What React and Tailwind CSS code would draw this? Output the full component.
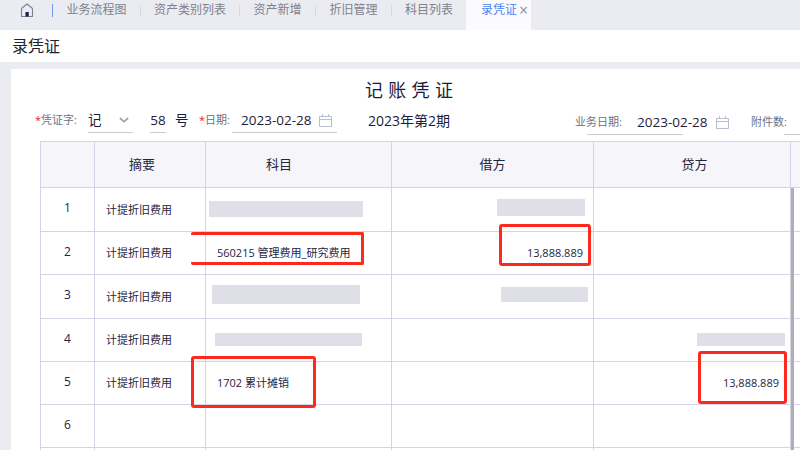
const FONT = "font-['Open_Sans','Noto_Sans_CJK_SC',sans-serif]";

function Home() {
  return (
    <svg width="14" height="14" viewBox="0 0 14 14" fill="none" className="block">
      <path d="M1.5 13.5V6.3C1.5 5.6 2 5 2.6 4.5L7 1l4.4 3.5c.6.5 1.1 1.1 1.1 1.8v7.2z" stroke="#7b818f" strokeWidth="1.1" strokeLinejoin="round" />
      <rect x="5.5" y="9" width="3.2" height="4.5" fill="#14204e" />
    </svg>
  );
}

function Calendar() {
  return (
    <svg width="13" height="13" viewBox="0 0 13 13" fill="none" className="block">
      <path d="M.5 2.5h12v10H.5zM.5 5.5h12M3.5 0v2.5M9.5 0v2.5" stroke="#b9bdd0" strokeWidth="1" />
    </svg>
  );
}

function Chevron() {
  return (
    <svg width="10" height="6" viewBox="0 0 10 6" fill="none" className="block">
      <path d="M.8 1 5 4.6 9.2 1" stroke="#a0a3b5" strokeWidth="1.7" />
    </svg>
  );
}

const TABS = [
  ["业务流程图", "w-[87px]"],
  ["资产类别列表", "w-[98px]"],
  ["资产新增", "w-[75px]"],
  ["折旧管理", "w-[75px]"],
];

function Tabs() {
  return (
    <div className="flex h-[30px] items-center bg-[#ebecf1] pb-[10px] text-[12px] text-[#80828c]">
      <div className="ml-[20px] w-[32px]"><Home /></div>
      <div className="h-[13px] w-px bg-[#6d9bf1]" />
      {TABS.map(([t, w]) => (
        <div key={t} className="flex items-center">
          <div className={`${w} text-center`}>{t}</div>
          <div className="h-[11px] w-px bg-[#d6d8e0]" />
        </div>
      ))}
      <div className="ml-[13px] w-[61px]">科目列表</div>
      <div className="-mb-[10px] flex h-[30px] w-[65px] items-center bg-[#fbfbfd] pb-[10px] pl-[15px] text-[#4f85f5]">
        <span className="whitespace-nowrap">录凭证</span>
        <span className="ml-[2px] text-[16px] leading-none text-[#8f919c]">×</span>
      </div>
    </div>
  );
}

function Underlined({ className, children }) {
  return <div className={`flex h-[25px] items-center border-b border-[#cccccc] ${className}`}>{children}</div>;
}

const LABEL = "flex h-[25px] items-center whitespace-nowrap text-[11px] text-[#70727c]";

function FormRow() {
  return (
    <div className="flex h-[26px] items-start text-[13.5px] text-[#1c1c3c]">
      <div className={`${LABEL} ml-[24px] w-[53px]`}><span className="text-[#f02020]">*</span>凭证字:</div>
      <Underlined className="w-[45px] justify-between pr-[4px]"><span>记</span><Chevron /></Underlined>
      <Underlined className="ml-[17px] w-[16px] justify-center"><span>58</span></Underlined>
      <div className="ml-[9px] flex h-[25px] w-[24px] items-center">号</div>
      <div className={`${LABEL} w-[33px]`}><span className="text-[#f02020]">*</span>日期:</div>
      <Underlined className="w-[105px] justify-between pl-[9px] pr-[5px]"><span>2023-02-28</span><Calendar /></Underlined>
      <div className="ml-[31px] flex h-[25px] w-[207px] items-center text-[14px]">2023年第2期</div>
      <div className={`${LABEL} mt-[2px] w-[62px]`}>业务日期:</div>
      <div className="relative mt-[2px] h-[25px] w-[114px]">
        <div className="flex h-full items-center justify-between pr-[22px]"><span>2023-02-28</span><Calendar /></div>
        <div className="absolute bottom-0 left-[-50px] h-px w-[96px] bg-[#cccccc]" />
      </div>
      <div className={`${LABEL} relative mt-[2px] flex-1`}>
        附件数:
        <div className="absolute bottom-0 left-[33px] h-px w-[20px] bg-[#cccccc]" />
      </div>
    </div>
  );
}

const COLS = ["w-[54px]", "w-[111px]", "w-[186px]", "w-[202px]", "w-[197px]"];
const HEAD = [
  ["", ""],
  ["摘要", "pr-[16px]"],
  ["科目", "pr-[39px]"],
  ["借方", ""],
  ["贷方", "pl-[5px]"],
];

function Mask({ className }) {
  return <div className={`bg-[#dfdfe8] ${className}`} />;
}

const SUB = "计提折旧费用";
const ROWS = [
  { h: "h-[44px]", n: 1, s: SUB, subject: <Mask className="ml-[3px] mt-[-2px] h-[16px] w-[154px]" />, debit: <Mask className="mr-[8px] mt-[-6px] h-[17px] w-[88px]" /> },
  { h: "h-[43px]", n: 2, s: SUB, subject: <span className="ml-[11px]">560215 管理费用_研究费用</span>, debit: <span className="mr-[10px]">13,888.889</span> },
  { h: "h-[44px]", n: 3, s: SUB, subject: <Mask className="ml-[6px] mt-[-6px] h-[19px] w-[148px]" />, debit: <Mask className="mr-[5px] mt-[-6px] h-[15px] w-[87px]" /> },
  { h: "h-[43px]", n: 4, s: SUB, subject: <Mask className="ml-[9px] mt-[-2px] h-[13px] w-[147px]" />, credit: <Mask className="mr-[5px] mt-[-2px] h-[13px] w-[88px]" /> },
  { h: "h-[43px]", n: 5, s: SUB, subject: <span className="ml-[11px]">1702 累计摊销</span>, credit: <span className="mr-[11px]">13,888.889</span> },
  { h: "h-[43px]", n: 6 },
  { h: "h-[43px]" },
];

function Table() {
  return (
    <div className="relative mt-[7px] ml-[29px] border-l border-[#d5d3e6]">
      <div className="flex h-[47px] border-y border-[#d5d3e6] bg-[#f5f5fa] text-[13px] text-[#25253f]">
        {HEAD.map(([t, p], i) => (
          <div key={i} className={`${COLS[i]} ${p} flex shrink-0 items-center justify-center border-r border-[#d5d3e6]`}>
            {t}
          </div>
        ))}
      </div>
      {ROWS.map((r, i) => (
        <div key={i} className={`flex ${r.h} border-b border-[#d5d3e6] text-[11px] text-[#25253f]`}>
          <div className={`${COLS[0]} flex shrink-0 items-center justify-center border-r border-[#d5d3e6] pb-[3px] text-[12px]`}>{r.n}</div>
          <div className={`${COLS[1]} flex shrink-0 items-center border-r border-[#d5d3e6] pl-[11px] pt-[1px]`}>{r.s}</div>
          <div className={`${COLS[2]} flex shrink-0 items-center border-r border-[#d5d3e6] pt-[1px]`}>{r.subject}</div>
          <div className={`${COLS[3]} flex shrink-0 items-center justify-end border-r border-[#d5d3e6] pt-[1px]`}>{r.debit}</div>
          <div className={`${COLS[4]} flex shrink-0 items-center justify-end border-r border-[#d5d3e6] pt-[1px]`}>{r.credit}</div>
        </div>
      ))}
      <div className="absolute left-[750px] top-[47px] h-[270px] w-[3px] bg-[#b0b0b0]" />
      <div className="absolute left-[150px] top-[91px] h-[33px] w-[173px] rounded-[2px] border-y-[3px] border-r-[3px] border-[#fa2a1e]" />
      <div className="absolute left-[458px] top-[83px] h-[42px] w-[92px] rounded-[3px] border-[3px] border-[#fa2a1e]" />
      <div className="absolute left-[150px] top-[215px] h-[52px] w-[125px] rounded-[3px] border-[3px] border-[#fa2a1e]" />
      <div className="absolute left-[657px] top-[210px] h-[53px] w-[89px] rounded-[3px] border-[3px] border-[#fa2a1e]" />
    </div>
  );
}

export default function App() {
  return (
    <div className={`h-[450px] w-[800px] overflow-hidden bg-[#ebecf1] ${FONT}`}>
      <Tabs />
      <div className="flex h-[32px] items-center bg-white pl-[12px] text-[16px] text-[#222233]">录凭证</div>
      <div className="ml-[11px] mt-[7px] h-[381px] overflow-hidden bg-white">
        <div className="flex h-[39px] items-center pl-[354px] pt-[3px] text-[18px] tracking-[5.3px] text-[#1c1c3c]">记账凭证</div>
        <FormRow />
        <Table />
      </div>
    </div>
  );
}
